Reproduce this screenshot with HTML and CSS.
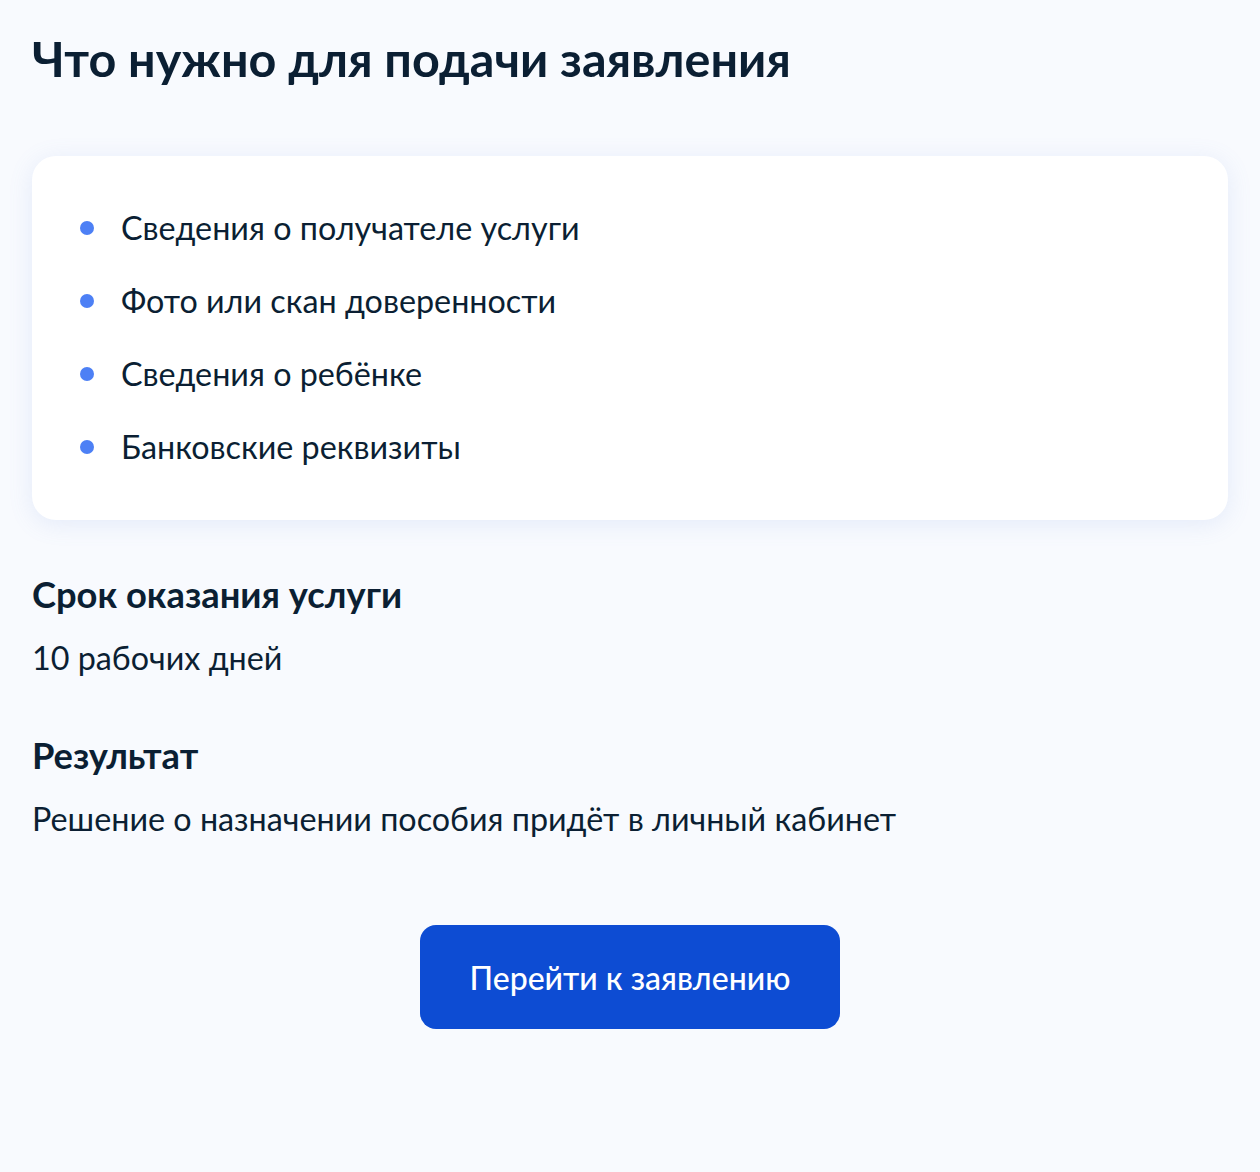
FILE: index.html
```html
<!DOCTYPE html>
<html lang="ru">
<head>
<meta charset="utf-8">
<title>Что нужно для подачи заявления</title>
<link rel="stylesheet" href="styles.css">
</head>
<body>
<main class="page">
  <h1 class="title">Что нужно для подачи заявления</h1>
  <section class="card">
    <ul class="list">
      <li class="item">Сведения о получателе услуги</li>
      <li class="item">Фото или скан доверенности</li>
      <li class="item">Сведения о ребёнке</li>
      <li class="item">Банковские реквизиты</li>
    </ul>
  </section>
  <section class="info">
    <h2 class="subtitle">Срок оказания услуги</h2>
    <p class="text">10 рабочих дней</p>
  </section>
  <section class="info">
    <h2 class="subtitle">Результат</h2>
    <p class="text">Решение о назначении пособия придёт в личный кабинет</p>
  </section>
  <div class="actions">
    <button class="btn" type="button">Перейти к заявлению</button>
  </div>
</main>
</body>
</html>
```

FILE: styles.css
```css
html, body {
  margin: 0;
  padding: 0;
}
body {
  background: #f8fafe;
  font-family: Lato, "Noto Sans", sans-serif;
  color: #0b1f33;
}
.page {
  padding: 26px 32px 0 32px;
}
.title {
  margin: 0;
  font-size: 48.5px;
  font-weight: 700;
  line-height: 64px;
}
.card {
  margin-top: 66px;
  background: #ffffff;
  border-radius: 24px;
  box-shadow: 0 4px 24px rgba(105, 140, 220, 0.14);
  padding: 48px 48px 49px 48px;
}
.list {
  list-style: none;
  margin: 0;
  padding: 0;
  display: flex;
  flex-direction: column;
  gap: 25px;
}
.item {
  position: relative;
  padding-left: 41px;
  font-size: 32.3px;
  line-height: 48px;
}
.item::before {
  content: "";
  position: absolute;
  left: 0;
  top: 17px;
  width: 14px;
  height: 14px;
  border-radius: 50%;
  background: #4d80f5;
}
.info {
  margin-top: 50px;
}
.info + .info {
  margin-top: 49px;
}
.subtitle {
  margin: 0;
  font-size: 36.3px;
  font-weight: 700;
  line-height: 48px;
}
.text {
  margin: 16px 0 0 0;
  font-size: 32.3px;
  line-height: 48px;
}
.actions {
  display: flex;
  justify-content: center;
  margin-top: 82px;
}
.btn {
  width: 420px;
  height: 104px;
  border: none;
  border-radius: 16px;
  background: #0d4cd3;
  color: #ffffff;
  font-family: Lato, "Noto Sans", sans-serif;
  font-size: 32px;
  font-weight: 500;
}
```
